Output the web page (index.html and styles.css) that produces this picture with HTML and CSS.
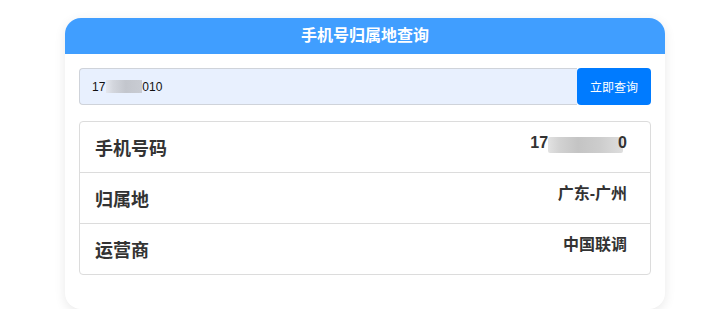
FILE: index.html
```html
<!DOCTYPE html>
<html lang="zh">
<head>
<meta charset="utf-8">
<title>手机号归属地查询</title>
<link rel="stylesheet" href="styles.css">
</head>
<body>
<div class="card">
  <div class="card-header">手机号归属地查询</div>
  <div class="card-body">
    <div class="search">
      <div class="input">17<span class="mask-in"></span>010</div>
      <button class="btn">立即查询</button>
    </div>
    <div class="table">
      <div class="row">
        <div class="label">手机号码</div>
        <div class="value">17<span class="mask-val"></span><span class="last">0</span></div>
      </div>
      <div class="row">
        <div class="label">归属地</div>
        <div class="value">广东-广州</div>
      </div>
      <div class="row">
        <div class="label">运营商</div>
        <div class="value">中国联调</div>
      </div>
    </div>
  </div>
</div>
</body>
</html>
```
FILE: styles.css
```css
body {
  margin: 0;
  background: #fff;
  font-family: "Liberation Sans", "Noto Sans CJK SC", sans-serif;
  color: #333;
}
.card {
  width: 600px;
  margin: 18px 0 0 65px;
  background: #fff;
  border-radius: 16px;
  box-shadow: 0 3px 12px rgba(0, 0, 0, 0.09);
}
.card-header {
  height: 36px;
  line-height: 36px;
  background: #409eff;
  border-radius: 16px 16px 0 0;
  color: #fff;
  text-align: center;
  font-size: 16px;
  font-weight: bold;
}
.card-body {
  padding: 14px 14px 34px;
}
.search {
  display: flex;
  height: 37px;
}
.input {
  flex: 1;
  display: flex;
  align-items: center;
  box-sizing: border-box;
  background: #e8f0fe;
  border: 1px solid #cfd3da;
  border-right: none;
  border-radius: 4px 0 0 4px;
  padding-left: 12px;
  font-size: 12px;
  color: #111;
}
.mask-in {
  display: inline-block;
  width: 36px;
  height: 13px;
  margin-left: 1px;
  background: linear-gradient(90deg, #e4e7ee 0, #d3d6dd 20%, #c3c6cd 55%, #c9ccd3 100%);
}
.btn {
  width: 74px;
  border: none;
  border-radius: 4px;
  background: #007bff;
  color: #fff;
  font-family: "Noto Sans CJK SC", sans-serif;
  font-size: 12px;
  padding: 0;
}
.table {
  margin-top: 16px;
  border: 1px solid #dcdcdc;
  border-radius: 4px;
}
.row {
  display: flex;
  justify-content: space-between;
  align-items: flex-start;
  height: 50px;
  padding: 0 23px 0 15px;
}
.row + .row {
  border-top: 1px solid #dcdcdc;
}
.label {
  margin-top: 15px;
  font-size: 18px;
  line-height: 24px;
  font-weight: bold;
  color: #333;
}
.value {
  margin-top: 10px;
  font-size: 16px;
  line-height: 22px;
  font-weight: bold;
  color: #333;
  display: flex;
  align-items: center;
}
.mask-val {
  display: inline-block;
  width: 75px;
  height: 16px;
  margin-top: 3px;
  background: linear-gradient(90deg, #e2e2e2 0, #d2d2d2 15%, #c4c4c4 40%, #cdcdcd 70%, #dedede 100%);
  border-radius: 2px;
}
.last {
  margin-left: -5px;
}
```
